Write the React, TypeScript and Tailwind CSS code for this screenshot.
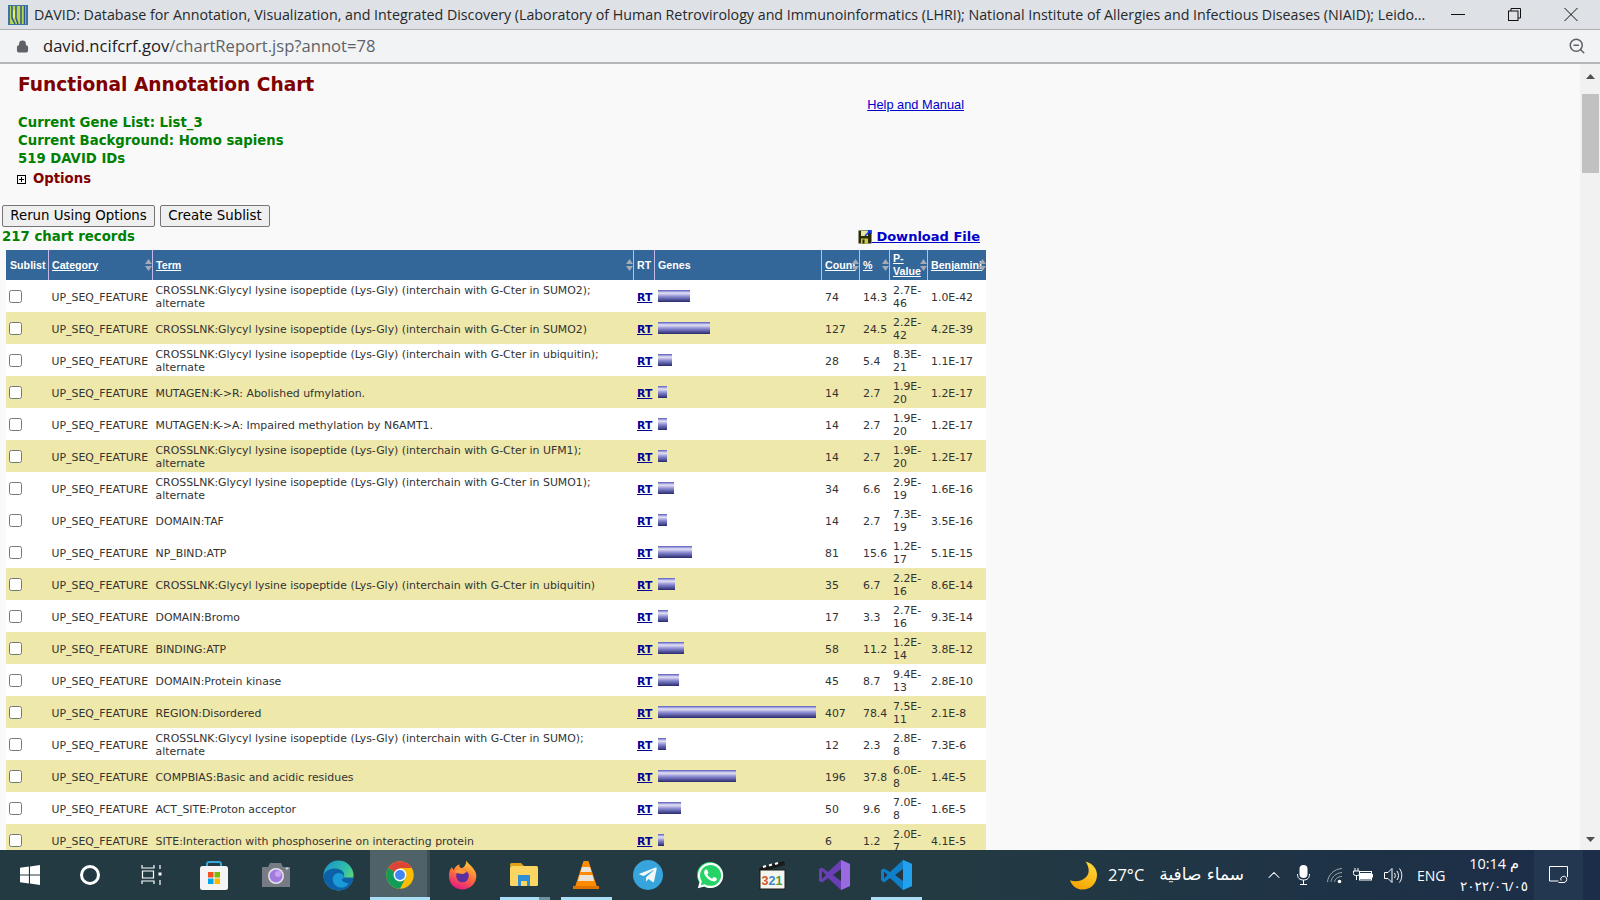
import React from 'react';
import { Lock, ZoomOut, ChevronUp } from 'lucide-react';
import { FaTelegramPlane, FaWhatsapp } from 'react-icons/fa';

const COLS = 'grid grid-cols-[42px_104px_481px_21px_167px_38px_30px_38px_59px]';

type Row = { term: string; count: number; pct: string; p: string; ben: string };

const ROWS: Row[] = [
  { term: 'CROSSLNK:Glycyl lysine isopeptide (Lys-Gly) (interchain with G-Cter in SUMO2); alternate', count: 74, pct: '14.3', p: '2.7E-46', ben: '1.0E-42' },
  { term: 'CROSSLNK:Glycyl lysine isopeptide (Lys-Gly) (interchain with G-Cter in SUMO2)', count: 127, pct: '24.5', p: '2.2E-42', ben: '4.2E-39' },
  { term: 'CROSSLNK:Glycyl lysine isopeptide (Lys-Gly) (interchain with G-Cter in ubiquitin); alternate', count: 28, pct: '5.4', p: '8.3E-21', ben: '1.1E-17' },
  { term: 'MUTAGEN:K->R: Abolished ufmylation.', count: 14, pct: '2.7', p: '1.9E-20', ben: '1.2E-17' },
  { term: 'MUTAGEN:K->A: Impaired methylation by N6AMT1.', count: 14, pct: '2.7', p: '1.9E-20', ben: '1.2E-17' },
  { term: 'CROSSLNK:Glycyl lysine isopeptide (Lys-Gly) (interchain with G-Cter in UFM1); alternate', count: 14, pct: '2.7', p: '1.9E-20', ben: '1.2E-17' },
  { term: 'CROSSLNK:Glycyl lysine isopeptide (Lys-Gly) (interchain with G-Cter in SUMO1); alternate', count: 34, pct: '6.6', p: '2.9E-19', ben: '1.6E-16' },
  { term: 'DOMAIN:TAF', count: 14, pct: '2.7', p: '7.3E-19', ben: '3.5E-16' },
  { term: 'NP_BIND:ATP', count: 81, pct: '15.6', p: '1.2E-17', ben: '5.1E-15' },
  { term: 'CROSSLNK:Glycyl lysine isopeptide (Lys-Gly) (interchain with G-Cter in ubiquitin)', count: 35, pct: '6.7', p: '2.2E-16', ben: '8.6E-14' },
  { term: 'DOMAIN:Bromo', count: 17, pct: '3.3', p: '2.7E-16', ben: '9.3E-14' },
  { term: 'BINDING:ATP', count: 58, pct: '11.2', p: '1.2E-14', ben: '3.8E-12' },
  { term: 'DOMAIN:Protein kinase', count: 45, pct: '8.7', p: '9.4E-13', ben: '2.8E-10' },
  { term: 'REGION:Disordered', count: 407, pct: '78.4', p: '7.5E-11', ben: '2.1E-8' },
  { term: 'CROSSLNK:Glycyl lysine isopeptide (Lys-Gly) (interchain with G-Cter in SUMO); alternate', count: 12, pct: '2.3', p: '2.8E-8', ben: '7.3E-6' },
  { term: 'COMPBIAS:Basic and acidic residues', count: 196, pct: '37.8', p: '6.0E-8', ben: '1.4E-5' },
  { term: 'ACT_SITE:Proton acceptor', count: 50, pct: '9.6', p: '7.0E-8', ben: '1.6E-5' },
  { term: 'SITE:Interaction with phosphoserine on interacting protein', count: 6, pct: '1.2', p: '2.0E-7', ben: '4.1E-5' },
];

const SortArrows = () => (
  <svg width="7" height="12" viewBox="0 0 7 12" className="absolute right-0 top-[9px]">
    <path d="M3.5 0 7 5H0z M3.5 12 0 7h7z" fill="#a3a9b5" />
  </svg>
);

const HeadCell = ({ label, link, sort, first }: { label: string; link?: boolean; sort?: boolean; first?: boolean }) => (
  <div className={`relative flex items-center overflow-visible ${first ? 'pl-[4px]' : 'pl-[3px] border-l border-[#c5b9ea]'}`}>
    <span className={`leading-[13px] ${link ? 'underline' : ''}`}>{label}</span>
    {sort && <SortArrows />}
  </div>
);

const AppIcon = ({ children, className, stripe }: { children: React.ReactNode; className?: string; stripe?: React.ReactNode }) => (
  <div className={`relative w-[62px] h-full flex items-center justify-center ${className ?? ''}`}>
    {children}
    {stripe}
  </div>
);

const WindowsLogo = () => (
  <svg width="20" height="20" viewBox="0 0 20 20" fill="#fff">
    <path d="M0 2.8 8.9 1.6v8H0zM10 1.4 20 0v9.6H10zM0 10.6h8.9v8L0 17.3zM10 10.6h10V20l-10-1.4z" />
  </svg>
);

const TaskView = () => (
  <svg width="22" height="20" viewBox="0 0 22 20" fill="none" stroke="#fff" strokeWidth="1.2">
    <path d="M1 0v3h12V0M1.5 6h11v7h-11zM1 19v-3h12v3M19 0v4M19 15v5" />
    <rect x="17.5" y="7.5" width="3" height="3" fill="#fff" stroke="none" />
  </svg>
);

const StoreIcon = () => (
  <svg width="30" height="30" viewBox="0 0 30 30">
    <path d="M8 7V3.5A2 2 0 0 1 10 2h10a2 2 0 0 1 2 1.5V7" fill="none" stroke="#35a8e0" strokeWidth="2" />
    <rect x="1" y="6" width="28" height="24" rx="2.5" fill="#f4f4f4" />
    <rect x="9" y="12" width="5.5" height="5.5" fill="#f25022" />
    <rect x="15.5" y="12" width="5.5" height="5.5" fill="#7fba00" />
    <rect x="9" y="18.5" width="5.5" height="5.5" fill="#00a4ef" />
    <rect x="15.5" y="18.5" width="5.5" height="5.5" fill="#ffb900" />
  </svg>
);

const CameraIcon = () => (
  <svg width="30" height="26" viewBox="0 0 30 26">
    <path d="M1 5h6l2-4h11l2 4h7v20H1z" fill="#767b84" />
    <circle cx="15" cy="14" r="8" fill="#e5e5ea" />
    <circle cx="15" cy="14" r="6.5" fill="#a27be0" />
    <circle cx="17" cy="12" r="3" fill="#c6a5ee" />
    <path d="M26 5v3M24.5 6.5h3" stroke="#c9ccd0" strokeWidth="1" />
  </svg>
);

const EdgeIcon = () => (
  <svg width="31" height="31" viewBox="0 0 32 32">
    <defs>
      <linearGradient id="edgeTop" x1="0" y1="0" x2="1" y2="0.8">
        <stop offset="0" stopColor="#1a8ed0" />
        <stop offset="0.6" stopColor="#31c1a6" />
        <stop offset="1" stopColor="#7ee05f" />
      </linearGradient>
    </defs>
    <circle cx="16" cy="16" r="15.5" fill="url(#edgeTop)" />
    <path d="M.5 16C3 9 12 7 18 10c4 2 5 6 3 8h10.500C31 24 26 31 17 31.500 8 32 .5 25 .5 16z" fill="#0c62a8" />
    <path d="M10 20c0-5 5-8 9-6 3 1 3 4 2 5-4 1 0 4 5 5 1 .500-3 6-10 4-4-1.500-6-5-6-8z" fill="#1a9ad6" />
  </svg>
);

const ChromeIcon = () => (
  <svg width="28" height="28" viewBox="0 0 48 48">
    <circle cx="24" cy="24" r="23.500" fill="#fbbc05" />
    <path d="M24 24 3.600 12.200A23.500 23.500 0 0 1 44.400 12.200H24z" fill="#db4437" />
    <path d="M3.600 12.200A23.500 23.500 0 0 0 24 47.500L35 26 24 24z" fill="#0f9d58" />
    <circle cx="24" cy="24" r="11" fill="#fff" />
    <circle cx="24" cy="24" r="8.500" fill="#4285f4" />
  </svg>
);

const FirefoxIcon = () => (
  <svg width="29" height="30" viewBox="0 0 30 30">
    <defs>
      <linearGradient id="ffx" x1="0.7" y1="0" x2="0.3" y2="1">
        <stop offset="0" stopColor="#ffcf3b" />
        <stop offset="0.5" stopColor="#ff7139" />
        <stop offset="1" stopColor="#e31587" />
      </linearGradient>
    </defs>
    <path d="M19 0c1 3 5 5 7 8 3 4 4 7 3 11-1 6-7 11-14 11C7 30 1 24 1 16c0-4 1-7 3-9l2 3c1-3 3-5 6-6-1 2 0 3 2 4 3-1 5-4 5-8z" fill="url(#ffx)" />
    <circle cx="15" cy="16" r="6.500" fill="#5b2fa0" />
    <path d="M6 12c3-4 11-4 14 0-2 0-3 2-5 2-3 0-6-1-9-2z" fill="#ff9a3b" />
  </svg>
);

const ExplorerIcon = () => (
  <svg width="28" height="24" viewBox="0 0 28 24">
    <path d="M0 1.500A1.500 1.500 0 0 1 1.500 0H11l3 3H0z" fill="#e0a21a" />
    <rect x="0" y="3" width="28" height="20" rx="1.500" fill="#fcd462" />
    <path d="M8 12h12v11h-3v-5h-6v5H8z" fill="#2e8fd6" />
  </svg>
);

const VlcIcon = () => (
  <svg width="26" height="29" viewBox="0 0 26 29">
    <path d="M10.500 0h5L24 26H2z" fill="#ff8c00" />
    <path d="M9 6h8l1.500 5h-11zM6.500 14h13l1.500 6H5z" fill="#e8e4dc" />
    <path d="M0 25h26v3H0z" fill="#e07400" />
  </svg>
);

const MpcIcon = () => (
  <svg width="28" height="30" viewBox="0 0 28 30">
    <path d="M1 8 26 1l1 4L2 12z" fill="#1a1a1a" />
    <path d="M5 7l3-1M11 5.500l3-1M17 4l3-1" stroke="#fff" strokeWidth="2" />
    <rect x="2" y="10" width="25" height="19" fill="#f5f5ef" stroke="#1a1a1a" />
    <text x="3.500" y="25" fontFamily="'Liberation Sans', sans-serif" fontWeight="700" fontSize="12.500">
      <tspan fill="#d4552a">3</tspan><tspan fill="#3f88c5">2</tspan><tspan fill="#4c9a3d">1</tspan>
    </text>
  </svg>
);

const VsIcon = () => (
  <svg width="31" height="30" viewBox="0 0 31 30">
    <path d="M22 0 31 4v22l-9 4-13-12-6 4.500L0 21V9l3-1.500L9 12z" fill="#6a3fb5" />
    <path d="M22 0 31 4v22l-9 4z" fill="#9a6be0" />
    <path d="M3 11v8l4-4zM22 9l-8 6 8 6z" fill="#24353f" />
  </svg>
);

const VscodeIcon = () => (
  <svg width="31" height="30" viewBox="0 0 31 30">
    <path d="M22 0 31 4v22l-9 4-13-12-6 4.500L0 20v-10l3-1.500L9 12z" fill="#0f7fc9" />
    <path d="M22 0 31 4v22l-9 4z" fill="#22a2ee" />
    <path d="M3 11.500v7l3.500-3.500zM22 9l-8 6 8 6z" fill="#24353f" />
  </svg>
);

const SaveIcon = () => (
  <svg width="14" height="14" viewBox="0 0 14 14" className="shrink-0">
    <rect x="0.500" y="0.500" width="13" height="13" fill="#2b2b00" />
    <rect x="3" y="1" width="7" height="5" fill="#e6e6a0" />
    <rect x="3" y="8.500" width="7" height="5" fill="#c8c850" />
    <rect x="4.500" y="9.500" width="2" height="4" fill="#2b2b00" />
    <path d="M7 6 12.500 .500M9.500 .500h3.500V4" stroke="#1133ff" strokeWidth="1.500" fill="none" />
  </svg>
);

const PlusBox = () => (
  <svg width="9" height="9" viewBox="0 0 9 9" fill="none" stroke="#000" strokeWidth="1" className="shrink-0">
    <rect x="0.500" y="0.500" width="8" height="8" />
    <path d="M2 4.500h5M4.500 2v5" />
  </svg>
);

const DavidFavicon = () => (
  <svg width="20" height="20" viewBox="0 0 20 20" className="shrink-0">
    <rect width="20" height="20" fill="#3d74a8" />
    <rect x="2" y="1" width="16" height="18" fill="#b9d454" />
    <path d="M4 1v12l3 6M8 1v12l2 6M13 1v18M16.500 1v18" stroke="#2c5a8c" strokeWidth="1.500" fill="none" />
    <rect x="5" y="5" width="2" height="8" fill="#e9f06a" />
  </svg>
);

const MinimizeIcon = () => (
  <svg width="14" height="13" viewBox="0 0 14 13"><path d="M0 6.500h14" stroke="#111" strokeWidth="1" /></svg>
);

const RestoreIcon = () => (
  <svg width="13" height="13" viewBox="0 0 13 13" fill="none" stroke="#111" strokeWidth="1">
    <path d="M3 3V.500h9.500V10H10" />
    <rect x="0.500" y="3" width="9.500" height="9.500" />
  </svg>
);

const CloseIcon = () => (
  <svg width="14" height="13" viewBox="0 0 14 13"><path d="M.5 0 13.500 13M13.500 0 .5 13" stroke="#111" strokeWidth="1" /></svg>
);

const MoonIcon = () => (
  <svg width="27" height="29" viewBox="0 0 26 27">
    <defs>
      <linearGradient id="moon" x1="0.700" y1="0" x2="0.300" y2="1">
        <stop offset="0" stopColor="#ffd83a" />
        <stop offset="1" stopColor="#f5a300" />
      </linearGradient>
    </defs>
    <path d="M15 0c7 2 11 7 11 13 0 8-6 14-14 14C7 27 2 24 0 18c8 3 18-1 18-9 0-3-1-6-3-9z" fill="url(#moon)" />
  </svg>
);

const MicIcon = () => (
  <svg width="13" height="20" viewBox="0 0 13 20" fill="none" stroke="#fff" strokeWidth="1">
    <rect x="2.500" y="0" width="8" height="13" rx="4" fill="#fff" stroke="none" />
    <path d="M.500 9c0 4 2 6 6 6s6-2 6-6M6.500 15v4M3 19.500h7" />
  </svg>
);

const WifiIcon = () => (
  <svg width="16" height="17" viewBox="0 0 16 17" fill="none" stroke="#9ba6ad" strokeWidth="1">
    <path d="M.500 15C1 8 7 2 15 1.500M4 15c.500-5 5-9 11-9.500M7.500 15c.500-3 3-5.500 7.500-5.500" />
    <circle cx="12.500" cy="14.500" r="1.800" fill="#fff" stroke="none" />
  </svg>
);

const BatteryIcon = () => (
  <svg width="20" height="15" viewBox="0 0 20 15" fill="none" stroke="#fff" strokeWidth="1">
    <path d="M2 0v3M5 0v3M.500 3h6v2.500a2 2 0 0 1-2 2h-2a2 2 0 0 1-2-2zM3.500 7.500V12" />
    <rect x="6.500" y="3.500" width="12" height="8.500" />
    <rect x="6" y="5" width="12" height="6" fill="#fff" stroke="none" />
    <rect x="18.500" y="6" width="1.500" height="3.500" fill="#fff" stroke="none" />
  </svg>
);

const SpeakerIcon = () => (
  <svg width="19" height="17" viewBox="0 0 19 17" fill="none" stroke="#fff" strokeWidth="1">
    <path d="M.500 5.500H4L8 1.500v14L4 11.500H.500zM10.500 6c1 1.500 1 3.500 0 5M13 4c2 3 2 6 0 9M15.500 1.500c3 4 3 10 0 14" />
  </svg>
);

const NotifyIcon = () => (
  <svg width="19" height="18" viewBox="0 0 19 18" fill="none" stroke="#fff" strokeWidth="1">
    <path d="M.500.500h18V11M.500.500V15h9" />
    <path d="M12 14.500a3 3 0 0 1 5.500-2.500c.800 2-.500 4.500-2.500 4.500H9.500" />
  </svg>
);

export default function App() {
  return (
    <div className="w-[1600px] h-screen flex flex-col overflow-hidden bg-[#f9f9f9] font-['DejaVu_Sans',sans-serif]">
      {/* Title bar */}
      <div className="h-[30px] shrink-0 flex items-center bg-[#dee1e6] border-b border-[#aeb0b4] font-['Open_Sans',sans-serif] text-[14.25px] text-[#26282b]">
        <div className="pl-2 pr-[6px] pt-px"><DavidFavicon /></div>
        <span className="w-[1400px] whitespace-nowrap overflow-hidden">
          DAVID: Database for Annotation, Visualization, and Integrated Discovery (Laboratory of Human Retrovirology and Immunoinformatics (LHRI); National Institute of Allergies and Infectious Diseases (NIAID); Leido...
        </span>
        <div className="flex-1 flex items-center justify-end gap-[43px] pr-[22px]">
          <MinimizeIcon />
          <RestoreIcon />
          <CloseIcon />
        </div>
      </div>

      {/* Address bar */}
      <div className="h-[34px] shrink-0 flex items-center bg-[#f1f3f4] border-b-2 border-[#b3b5b8] font-['Open_Sans',sans-serif] text-[16.6px]">
        <div className="pl-[16px] pr-[14px]"><Lock size={13} strokeWidth={2.5} color="#5f6368" fill="#5f6368" /></div>
        <span className="text-[#202124]">david.ncifcrf.gov</span>
        <span className="text-[#5f6368]">/chartReport.jsp?annot=78</span>
        <div className="flex-1 flex justify-end pr-[14px]"><ZoomOut size={18} strokeWidth={2} color="#5f6368" /></div>
      </div>

      {/* Page */}
      <div className="flex-1 min-h-0 flex">
        <div className="flex-1 overflow-hidden pt-[8px] pl-[2px]">
          <div className="w-[984px]">
            <div className="flex">
              <div className="pl-4 flex-1">
                <h1 className="pt-px text-[18.6px] leading-[24px] font-bold text-[#800000]">Functional Annotation Chart</h1>
                <div className="mt-[17px] text-[13.25px] leading-[18px] font-bold text-[#008000]">
                  <div>Current Gene List: List_3</div>
                  <div>Current Background: Homo sapiens</div>
                  <div>519 DAVID IDs</div>
                </div>
                <div className="mt-[2px] -ml-px flex items-center gap-[7px] h-[18px] text-[13.25px] font-bold text-[#800000]">
                  <PlusBox />
                  Options
                </div>
              </div>
              <a className="mt-[23px] mr-[22px] h-[16px] font-['Liberation_Sans',sans-serif] text-[12.8px] text-[#0000cc] underline">Help and Manual</a>
            </div>

            <div className="mt-[17px] flex gap-[5px] text-[13.33px] text-black">
              <button className="h-[22px] w-[153px] rounded-[2px] border border-[#767676] bg-[#efefef]">Rerun Using Options</button>
              <button className="h-[22px] w-[110px] rounded-[2px] border border-[#767676] bg-[#efefef]">Create Sublist</button>
            </div>

            <div className="flex items-center justify-between h-[20px] pr-[6px] text-[13.3px] font-bold">
              <span className="text-[#008000]">217 chart records</span>
              <a className="flex items-center text-[13px] text-[#0000cc] underline whitespace-pre"><SaveIcon /> Download File</a>
            </div>

            {/* Chart table */}
            <div className="ml-[4px] mt-[3px] w-[980px]">
              <div className={`${COLS} h-[30px] bg-[#336699] text-white font-bold font-['Liberation_Sans',sans-serif] text-[10.67px]`}>
                <HeadCell label="Sublist" first />
                <HeadCell label="Category" link sort />
                <HeadCell label="Term" link sort />
                <HeadCell label="RT" />
                <HeadCell label="Genes" />
                <HeadCell label="Count" link sort />
                <HeadCell label="%" link sort />
                <HeadCell label="P-Value" link sort />
                <HeadCell label="Benjamini" link sort />
              </div>
              {ROWS.map((r, i) => (
                <div key={i} className={`${COLS} h-[32px] items-center text-[10.9px] leading-[13px] text-[#333] ${i % 2 === 1 && i !== 7 ? 'bg-[#eee8aa]' : 'bg-white'}`}>
                  <div className="pl-[3px] flex"><input type="checkbox" className="m-0 w-[13px] h-[13px]" /></div>
                  <div className="pl-[3.5px] pt-[2px] whitespace-nowrap">UP_SEQ_FEATURE</div>
                  <div className="pl-[3.5px] pt-[2px]">{r.term}</div>
                  <div className="pl-[4px] pt-[2px] font-bold text-[#000099] underline">RT</div>
                  <div className="pl-[4px]">
                    <div
                      className="h-[12px] bg-[linear-gradient(to_bottom,#5a5ac0_0%,#e4e4f6_25%,#8a8ad2_55%,#28286e_100%)]"
                      style={{ width: Math.round(3.5 + r.count * 0.38) }}
                    />
                  </div>
                  <div className="pl-[4px] pt-[2px]">{r.count}</div>
                  <div className="pl-[4px] pt-[2px]">{r.pct}</div>
                  <div className="pl-[4px] pt-[2px]">{r.p}</div>
                  <div className="pl-[4px] pt-[2px]">{r.ben}</div>
                </div>
              ))}
            </div>
          </div>
        </div>

        {/* Scrollbar */}
        <div className="w-[20px] shrink-0 bg-[#f1f1f1] flex flex-col items-center justify-between pt-[10px] pb-[8px] relative">
          <svg width="9" height="5" viewBox="0 0 9 5"><path d="M4.500 0 9 5H0z" fill="#505050" /></svg>
          <div className="absolute top-[30px] left-[2px] w-[17px] h-[79px] bg-[#c1c1c1]" />
          <svg width="9" height="5" viewBox="0 0 9 5"><path d="M4.500 5 9 0H0z" fill="#505050" /></svg>
        </div>
      </div>

      {/* Taskbar */}
      <div className="h-[50px] shrink-0 flex items-center bg-[linear-gradient(to_right,#233a43,#233a43_60%,#1b2d48)] text-white font-['Open_Sans',sans-serif]">
        <div className="w-[60px] h-full flex items-center justify-center"><WindowsLogo /></div>
        <div className="w-[60px] h-full flex items-center justify-center">
          <div className="w-[20px] h-[20px] rounded-full border-[3px] border-white" />
        </div>
        <div className="w-[63px] h-full flex items-center justify-center"><TaskView /></div>
        <AppIcon><StoreIcon /></AppIcon>
        <AppIcon><CameraIcon /></AppIcon>
        <AppIcon><EdgeIcon /></AppIcon>
        <AppIcon
          className="bg-[linear-gradient(to_right,#233a43_1px,#4f6268_1px,#4f6268_58px,#3b4e56_58px,#3b4e56_61px,#233a43_61px)]"
          stripe={<div className="absolute bottom-0 left-[1px] right-[1px] h-[3px] bg-[#a9def6]" />}
        >
          <ChromeIcon />
        </AppIcon>
        <AppIcon><FirefoxIcon /></AppIcon>
        <AppIcon stripe={<div className="absolute bottom-0 left-[7px] right-[5px] h-[3px] bg-[linear-gradient(to_right,#a9def6_39px,#6f909f_39px)]" />}><ExplorerIcon /></AppIcon>
        <AppIcon stripe={<div className="absolute bottom-0 left-[6px] right-[5px] h-[3px] bg-[#a9def6]" />}><VlcIcon /></AppIcon>
        <AppIcon>
          <div className="w-[30px] h-[30px] rounded-full bg-[#37a4dc] flex items-center justify-center">
            <FaTelegramPlane size={20} color="#f2f7fa" />
          </div>
        </AppIcon>
        <AppIcon>
          <div className="w-[26px] h-[26px] rounded-full bg-[#25d366] flex items-center justify-center">
            <FaWhatsapp size={29} color="#fff" className="shrink-0" />
          </div>
        </AppIcon>
        <AppIcon><MpcIcon /></AppIcon>
        <AppIcon><VsIcon /></AppIcon>
        <AppIcon stripe={<div className="absolute bottom-0 left-[6px] right-[5px] h-[3px] bg-[#a9def6]" />}><VscodeIcon /></AppIcon>

        <div className="flex-1" />

        {/* Tray */}
        <div className="flex items-center h-full">
          <MoonIcon />
          <span className="ml-[11px] w-[37px] text-[16.5px] whitespace-nowrap">27°C</span>
          <span dir="rtl" className="ml-[12px] w-[87px] whitespace-nowrap text-[17px] font-['DejaVu_Sans',sans-serif]">سماء صافية</span>
          <ChevronUp size={20} strokeWidth={1.25} className="ml-[20px]" />
          <div className="ml-[13px] flex"><MicIcon /></div>
          <div className="ml-[17px] flex"><WifiIcon /></div>
          <div className="ml-[10px] flex"><BatteryIcon /></div>
          <div className="ml-[11px] flex"><SpeakerIcon /></div>
          <span className="ml-[14px] w-[29px] text-[14px]">ENG</span>
          <div className="ml-[11px] w-[74px] text-center leading-[22px] whitespace-nowrap font-['Open_Sans','DejaVu_Sans',sans-serif]">
            <div className="text-[14.5px]">10:14 م</div>
            <div className="text-[13.5px]">٢٠٢٢/٠٦/٠٥</div>
          </div>
          <div className="ml-[3px] w-[49px] h-full bg-[#243751] flex items-center justify-center"><NotifyIcon /></div>
          <div className="w-[17px]" />
        </div>
      </div>
    </div>
  );
}
